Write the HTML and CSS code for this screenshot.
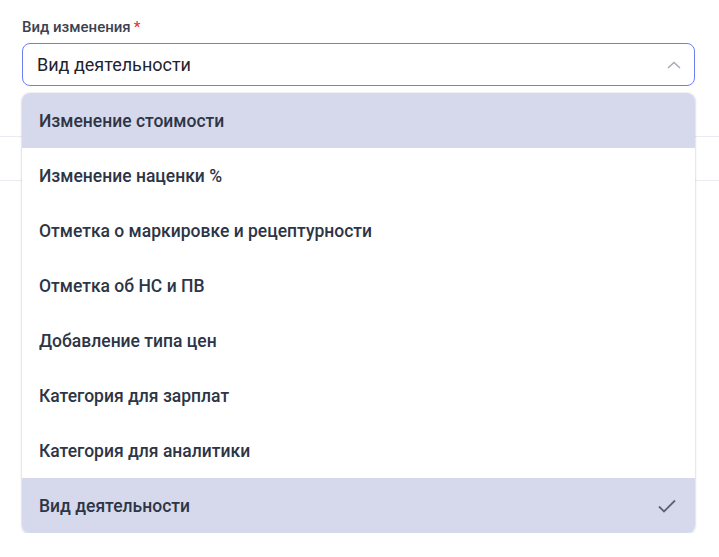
FILE: index.html
```html
<!DOCTYPE html>
<html lang="ru">
<head>
    <meta charset="UTF-8">
    <meta name="viewport" content="width=device-width, initial-scale=1.0">
    <title>Вид изменения</title>
    <link rel="stylesheet" href="styles.css">
</head>
<body>
    <div class="backdrop">
        <div class="backdrop-row"></div>
        <div class="backdrop-row"></div>
    </div>
    <div class="field">
        <label class="field-label">Вид изменения<span class="required">*</span></label>
        <div class="select">
            <span class="select-value">Вид деятельности</span>
            <svg class="chevron" width="14" height="8" viewBox="0 0 14 8"><path d="M1 7 L7 1.5 L13 7" fill="none" stroke="#a3aab8" stroke-width="1.4"/></svg>
        </div>
        <ul class="options">
            <li class="option hover">Изменение стоимости</li>
            <li class="option">Изменение наценки %</li>
            <li class="option">Отметка о маркировке и рецептурности</li>
            <li class="option">Отметка об НС и ПВ</li>
            <li class="option">Добавление типа цен</li>
            <li class="option">Категория для зарплат</li>
            <li class="option">Категория для аналитики</li>
            <li class="option selected">Вид деятельности
                <svg class="check" width="20" height="16" viewBox="0 0 20 16"><path d="M2 8.5 L7 13.5 L18 2.5" fill="none" stroke="#5b6275" stroke-width="1.8"/></svg>
            </li>
        </ul>
    </div>
</body>
</html>
```

FILE: styles.css
```css
body {
    margin: 0;
    font-family: Roboto, "Liberation Sans", sans-serif;
    background: #fff;
    color: #2f3747;
}
.backdrop {
    position: absolute;
    top: 136px;
    left: 0;
    width: 719px;
}
.backdrop-row {
    height: 43px;
    border-top: 1px solid #ebebf3;
}
.field {
    position: relative;
    padding: 17px 24px 0 22px;
}
.field-label {
    display: block;
    font-size: 15px;
    font-weight: 500;
    color: #3d4250;
    line-height: 20px;
    margin-bottom: 6px;
}
.required {
    color: #e53935;
    margin-left: 3px;
}
.select {
    display: flex;
    align-items: center;
    justify-content: space-between;
    height: 41px;
    border: 1px solid #6e7df2;
    border-radius: 8px;
    padding: 0 13px 0 14px;
    background: #fff;
}
.select-value {
    font-size: 18px;
    color: #1e2330;
}
.chevron {
    margin-top: 1px;
}
.options {
    list-style: none;
    margin: 7px 0 0;
    padding: 0;
    background: #fff;
    border-radius: 8px;
    overflow: hidden;
    box-shadow: 0 1px 3px rgba(30, 35, 70, 0.18), 0 0 0 1px rgba(30, 35, 70, 0.04);
}
.option {
    display: flex;
    align-items: center;
    justify-content: space-between;
    height: 55px;
    padding: 0 18px 0 17px;
    font-size: 17.5px;
    font-weight: 500;
    color: #2d3546;
}
.option.hover,
.option.selected {
    background: #d6d9eb;
}
```
